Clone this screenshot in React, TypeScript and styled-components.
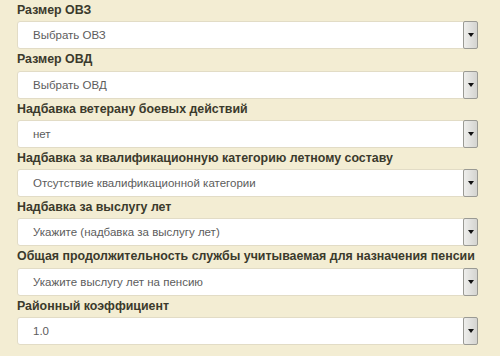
import styled, { createGlobalStyle } from "styled-components";

const GlobalStyle = createGlobalStyle`
    html, body {
        margin: 0;
        padding: 0;
        background: #f3edd3;
    }
    body {
        font-family: "Liberation Sans", Arial, sans-serif;
    }
`;

const Form = styled.div`
    width: 500px;
    height: 356px;
    padding: 3px 22px 0 17px;
    box-sizing: border-box;
    background: #f3edd3;
    overflow: hidden;
`;

const Field = styled.div`
    display: flex;
    flex-direction: column;
    margin-bottom: 3px;
`;

const Label = styled.div`
    font-size: 12.4px;
    font-weight: bold;
    color: #3b3a2c;
    line-height: 15px;
    margin-bottom: 3.3px;
`;

const SelectBox = styled.div`
    display: flex;
    align-items: stretch;
    height: 28px;
    box-sizing: border-box;
    background: #fff;
    border: 1px solid #e2dcc6;
    border-radius: 3px;
`;

const Value = styled.div`
    flex: 1;
    display: flex;
    align-items: center;
    padding-left: 15px;
    font-size: 11.5px;
    color: #5c5c5c;
`;

const Arrow = styled.div`
    width: 13px;
    margin: -1px -1px -1px 0;
    display: flex;
    align-items: center;
    justify-content: center;
    border: 1px solid #9a9a94;
    border-radius: 2px;
    background: linear-gradient(to right, #eeeeec, #d4d4d0);

    &::after {
        content: "";
        border-left: 3px solid transparent;
        border-right: 3px solid transparent;
        border-top: 4px solid #111;
    }
`;

const fields = [
    { label: "Размер ОВЗ", value: "Выбрать ОВЗ" },
    { label: "Размер ОВД", value: "Выбрать ОВД" },
    { label: "Надбавка ветерану боевых действий", value: "нет" },
    { label: "Надбавка за квалификационную категорию летному составу", value: "Отсутствие квалификационной категории" },
    { label: "Надбавка за выслугу лет", value: "Укажите (надбавка за выслугу лет)" },
    { label: "Общая продолжительность службы учитываемая для назначения пенсии", value: "Укажите выслугу лет на пенсию" },
    { label: "Районный коэффициент", value: "1.0" },
];

export default function App() {
    return (
        <>
            <GlobalStyle />
            <Form>
                {fields.map((f, i) => (
                    <Field key={i}>
                        <Label>{f.label}</Label>
                        <SelectBox>
                            <Value>{f.value}</Value>
                            <Arrow />
                        </SelectBox>
                    </Field>
                ))}
            </Form>
        </>
    );
}
